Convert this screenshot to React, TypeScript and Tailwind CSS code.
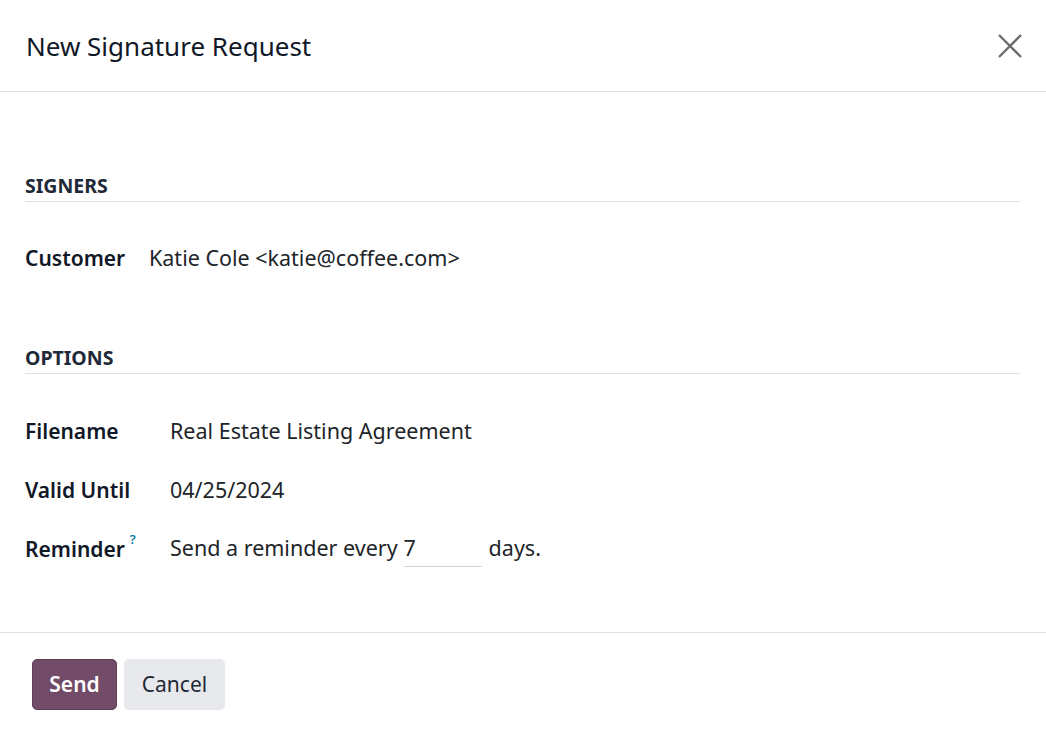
import { FC } from "react";

const Row: FC<{ label: string; labelWidth: string; help?: boolean; children: any }> = ({ label, labelWidth, help, children }) => {
  return (
    <div className="flex items-center h-[59px]">
      <div className={`${labelWidth} shrink-0 font-semibold text-[21px] text-[#111827] flex items-start`}>
        <span>{label}</span>
        {help && <span className="text-[#0b7fa8] text-[13px] font-semibold ml-[5px] leading-none -mt-[1px]">?</span>}
      </div>
      <div className="text-[#212529] text-[21.5px]">{children}</div>
    </div>
  );
};

const Section: FC<{ title: string }> = ({ title }) => {
  return (
    <div className="border-b border-[#dee2e6] pb-[3px]">
      <span className="block text-[19.5px] leading-[24px] font-bold text-[#1f2937]">{title}</span>
    </div>
  );
};

export default function App() {
  return (
    <div className="w-[1046px] h-[736px] bg-white flex flex-col" style={{ fontFamily: "'Noto Sans', 'Open Sans', sans-serif" }}>
      <div className="h-[92px] shrink-0 border-b border-[#dee2e6] flex items-center justify-between pl-[26px] pr-[22px]">
        <h1 className="text-[26px] text-[#111827] leading-none">New Signature Request</h1>
        <svg width="28" height="28" viewBox="0 0 28 28" className="text-[#6c6c6c]">
          <path d="M3 3 L25 25 M25 3 L3 25" stroke="currentColor" strokeWidth="2.4" />
        </svg>
      </div>

      <div className="flex-1 px-[25px] pt-[82px] pr-[26px]">
        <Section title="SIGNERS" />
        <div className="mt-[27px]">
          <Row label="Customer" labelWidth="w-[124px]">
            Katie Cole &lt;katie@coffee.com&gt;
          </Row>
        </div>

        <div className="mt-[58px]">
          <Section title="OPTIONS" />
        </div>
        <div className="mt-[28px] flex flex-col">
          <Row label="Filename" labelWidth="w-[145px]">
            Real Estate Listing Agreement
          </Row>
          <Row label="Valid Until" labelWidth="w-[145px]">
            04/25/2024
          </Row>
          <Row label="Reminder" labelWidth="w-[145px]" help>
            <div className="flex items-start">
              <span>Send a reminder every</span>
              <span className="ml-[6px] w-[78px] border-b border-[#d1d5db] pb-[2px]">7</span>
              <span className="ml-[7px]">days.</span>
            </div>
          </Row>
        </div>
      </div>

      <div className="h-[104px] shrink-0 border-t border-[#dee2e6] flex items-start gap-[7px] pl-[32px] pt-[26px]">
        <button className="h-[51px] w-[85px] rounded-[5px] bg-[#714b67] border border-[#5d3c55] text-white font-semibold text-[21px]">
          Send
        </button>
        <button className="h-[51px] w-[101px] rounded-[5px] bg-[#e7e9ed] text-[#1f2937] text-[21px]">
          Cancel
        </button>
      </div>
    </div>
  );
}
